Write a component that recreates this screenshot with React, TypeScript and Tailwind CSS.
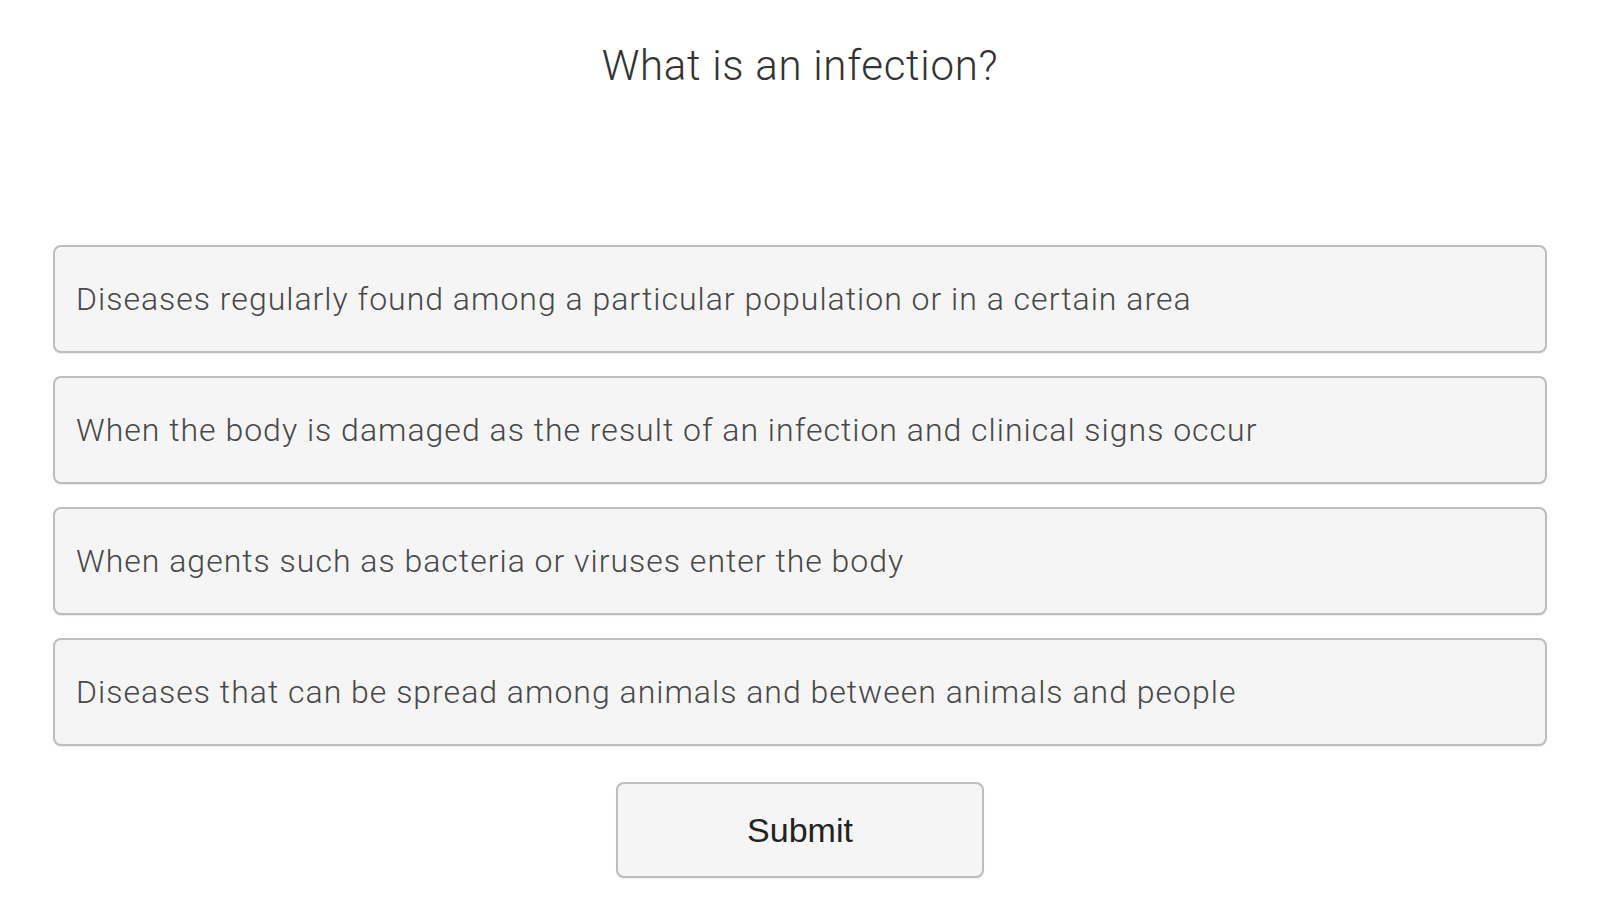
const options = [
  'Diseases regularly found among a particular population or in a certain area',
  'When the body is damaged as the result of an infection and clinical signs occur',
  'When agents such as bacteria or viruses enter the body',
  'Diseases that can be spread among animals and between animals and people',
]

export default function App() {
  return (
    <div className="min-h-[900px] w-full bg-white px-[53px] pt-[40px] font-['Roboto',_'Liberation_Sans',_sans-serif]">
      <h1 className="h-[52px] text-center text-[42px] font-light leading-[52px] tracking-[0.7px] text-[#333]">
        What is an infection?
      </h1>
      <div className="mt-[153px] flex flex-col gap-[23px]">
        {options.map((text) => (
          <button
            key={text}
            className="flex h-[108px] w-full items-center rounded-[8px] border-2 border-[#bdbdbd] bg-[#f5f5f5] px-[21px] text-left text-[32px] font-light tracking-[1px] text-[#484848] shadow-[0_1px_1px_rgba(0,0,0,0.08)]"
          >
            {text}
          </button>
        ))}
      </div>
      <div className="mt-[36px] flex justify-center">
        <button className="h-[96px] w-[368px] rounded-[8px] border-2 border-[#bdbdbd] bg-[#f5f5f5] font-['Liberation_Sans',_Arial,_sans-serif] text-[34px] text-[#222] shadow-[0_1px_1px_rgba(0,0,0,0.08)]">
          Submit
        </button>
      </div>
    </div>
  )
}
